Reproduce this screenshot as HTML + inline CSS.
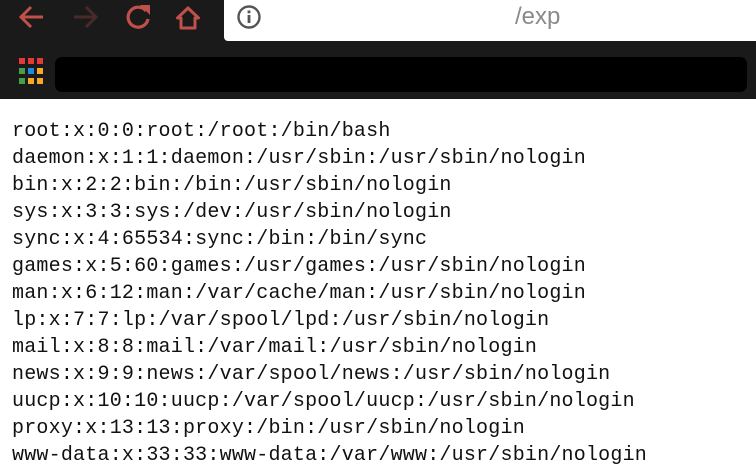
<!DOCTYPE html>
<html><head><style>
body{margin:0;width:756px;height:450px;overflow:hidden;background:#fff;position:relative;font-family:"Liberation Sans",sans-serif}
.top{position:absolute;left:0;top:0;width:756px;height:99px;background:#1a1a1a}
.url{position:absolute;left:224px;top:0;width:532px;height:41px;background:#fff;border-bottom-left-radius:4px}
.exp{position:absolute;top:3px;font-size:24px;color:#8a8a8a}
.bar{position:absolute;left:55px;top:57px;width:692px;height:35px;background:#000;border-radius:7px}
.g{position:absolute;width:6px;height:6px}
pre{position:absolute;left:12px;top:118px;margin:0;font-family:"Liberation Mono",monospace;font-size:20px;line-height:27px;color:#111;letter-spacing:0.21px}
</style></head><body>
<div class="top">
<svg width="220" height="42" style="position:absolute;left:0;top:0">
<g fill="none" stroke="#c0504a" stroke-width="3">
<path d="M43 17H21M31 7l-10 10 10 10"/>
</g>
<g fill="none" stroke="#4a2a28" stroke-width="3"><path d="M74 17H96M86 7l10 10-10 10"/></g>
<g fill="none" stroke="#c0504a" stroke-width="3.2">
<path d="M146 11a10 10 0 1 0 2 8"/>
</g>
<path d="M140 5h10v10z" fill="#c0504a"/>
<path d="M181 28V18h-3.5l10.5-10 10.5 10h-3.5v10h-14z" fill="none" stroke="#c0504a" stroke-width="3" stroke-linejoin="round"/>
</svg>
<div class="url"><svg width="30" height="30" style="position:absolute;left:12px;top:3px"><circle cx="13" cy="14" r="10.5" fill="none" stroke="#555" stroke-width="2.4"/><rect x="11.6" y="12" width="2.8" height="8" fill="#555"/><rect x="11.6" y="7.5" width="2.8" height="2.8" fill="#555"/></svg><div class="exp" style="left:291px">/exp</div></div>
<div class="g" style="left:19px;top:58px;background:#e53935"></div><div class="g" style="left:28px;top:58px;background:#e53935"></div><div class="g" style="left:37px;top:58px;background:#e53935"></div>
<div class="g" style="left:19px;top:68px;background:#43a047"></div><div class="g" style="left:28px;top:68px;background:#1e88e5"></div><div class="g" style="left:37px;top:68px;background:#f9a825"></div>
<div class="g" style="left:19px;top:78px;background:#43a047"></div><div class="g" style="left:28px;top:78px;background:#f9a825"></div><div class="g" style="left:37px;top:78px;background:#f9a825"></div>
<div class="bar"></div>
</div>
<pre>root:x:0:0:root:/root:/bin/bash
daemon:x:1:1:daemon:/usr/sbin:/usr/sbin/nologin
bin:x:2:2:bin:/bin:/usr/sbin/nologin
sys:x:3:3:sys:/dev:/usr/sbin/nologin
sync:x:4:65534:sync:/bin:/bin/sync
games:x:5:60:games:/usr/games:/usr/sbin/nologin
man:x:6:12:man:/var/cache/man:/usr/sbin/nologin
lp:x:7:7:lp:/var/spool/lpd:/usr/sbin/nologin
mail:x:8:8:mail:/var/mail:/usr/sbin/nologin
news:x:9:9:news:/var/spool/news:/usr/sbin/nologin
uucp:x:10:10:uucp:/var/spool/uucp:/usr/sbin/nologin
proxy:x:13:13:proxy:/bin:/usr/sbin/nologin
www-data:x:33:33:www-data:/var/www:/usr/sbin/nologin</pre>
</body></html>
